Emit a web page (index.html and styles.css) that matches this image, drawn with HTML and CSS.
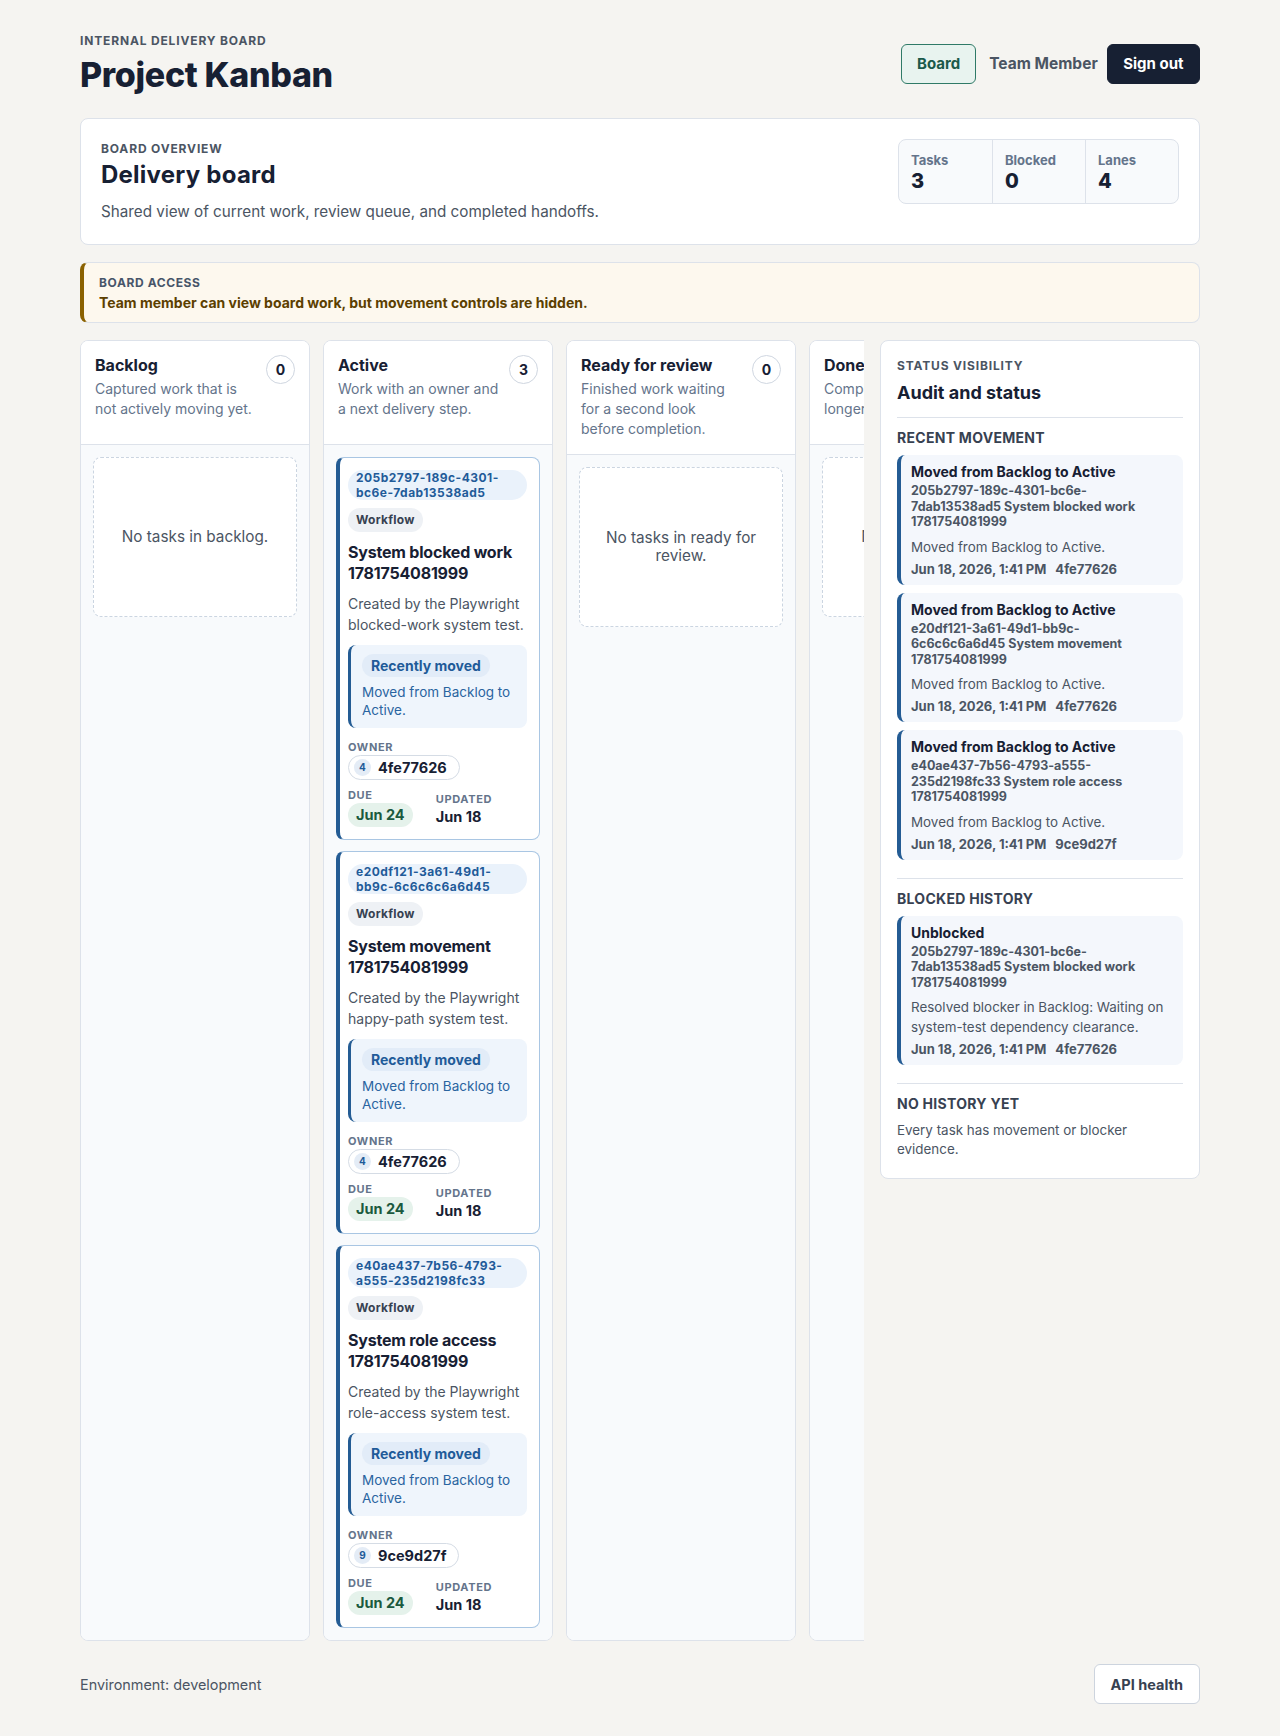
FILE: index.html
```html
<!DOCTYPE html>
<html lang="en">
<head>
<meta charset="utf-8">
<title>Project Kanban</title>
<link rel="stylesheet" href="styles.css">
</head>
<body>
<div class="page">
  <header class="topbar">
    <div class="brand">
      <p class="eyebrow">Internal delivery board</p>
      <h1>Project Kanban</h1>
    </div>
    <nav class="nav">
      <a class="btn btn-board" href="#">Board</a>
      <span class="role">Team Member</span>
      <button class="btn btn-dark" type="button">Sign out</button>
    </nav>
  </header>

  <section class="overview">
    <div class="overview-text">
      <p class="eyebrow">Board overview</p>
      <h2>Delivery board</h2>
      <p class="overview-desc">Shared view of current work, review queue, and completed handoffs.</p>
    </div>
    <dl class="stats">
      <div class="stat"><dt>Tasks</dt><dd>3</dd></div>
      <div class="stat"><dt>Blocked</dt><dd>0</dd></div>
      <div class="stat"><dt>Lanes</dt><dd>4</dd></div>
    </dl>
  </section>

  <section class="access">
    <p class="eyebrow">Board access</p>
    <p class="access-text">Team member can view board work, but movement controls are hidden.</p>
  </section>

  <div class="workspace">
    <div class="board">
      <div class="lanes">
        <section class="lane">
          <header class="lane-head">
            <div>
              <h3>Backlog</h3>
              <p>Captured work that is not actively moving yet.</p>
            </div>
            <span class="count">0</span>
          </header>
          <div class="lane-body">
            <div class="empty">No tasks in backlog.</div>
          </div>
        </section>

        <section class="lane">
          <header class="lane-head">
            <div>
              <h3>Active</h3>
              <p>Work with an owner and a next delivery step.</p>
            </div>
            <span class="count">3</span>
          </header>
          <div class="lane-body">
            <article class="task">
              <span class="task-id">205b2797-189c-4301-bc6e-7dab13538ad5</span>
              <span class="tag">Workflow</span>
              <h4>System blocked work 1781754081999</h4>
              <p class="task-desc">Created by the Playwright blocked-work system test.</p>
              <div class="moved">
                <span class="moved-pill">Recently moved</span>
                <p>Moved from Backlog to Active.</p>
              </div>
              <p class="label">Owner</p>
              <span class="owner"><span class="avatar">4</span>4fe77626</span>
              <div class="meta">
                <div><p class="label">Due</p><span class="due">Jun 24</span></div>
                <div><p class="label">Updated</p><span class="updated">Jun 18</span></div>
              </div>
            </article>

            <article class="task">
              <span class="task-id">e20df121-3a61-49d1-bb9c-6c6c6c6a6d45</span>
              <span class="tag">Workflow</span>
              <h4>System movement 1781754081999</h4>
              <p class="task-desc">Created by the Playwright happy-path system test.</p>
              <div class="moved">
                <span class="moved-pill">Recently moved</span>
                <p>Moved from Backlog to Active.</p>
              </div>
              <p class="label">Owner</p>
              <span class="owner"><span class="avatar">4</span>4fe77626</span>
              <div class="meta">
                <div><p class="label">Due</p><span class="due">Jun 24</span></div>
                <div><p class="label">Updated</p><span class="updated">Jun 18</span></div>
              </div>
            </article>

            <article class="task">
              <span class="task-id">e40ae437-7b56-4793-a555-235d2198fc33</span>
              <span class="tag">Workflow</span>
              <h4>System role access 1781754081999</h4>
              <p class="task-desc">Created by the Playwright role-access system test.</p>
              <div class="moved">
                <span class="moved-pill">Recently moved</span>
                <p>Moved from Backlog to Active.</p>
              </div>
              <p class="label">Owner</p>
              <span class="owner"><span class="avatar">9</span>9ce9d27f</span>
              <div class="meta">
                <div><p class="label">Due</p><span class="due">Jun 24</span></div>
                <div><p class="label">Updated</p><span class="updated">Jun 18</span></div>
              </div>
            </article>
          </div>
        </section>

        <section class="lane">
          <header class="lane-head">
            <div>
              <h3>Ready for review</h3>
              <p>Finished work waiting for a second look before completion.</p>
            </div>
            <span class="count">0</span>
          </header>
          <div class="lane-body">
            <div class="empty">No tasks in ready for review.</div>
          </div>
        </section>

        <section class="lane">
          <header class="lane-head">
            <div>
              <h3>Done</h3>
              <p>Completed work that no longer needs attention.</p>
            </div>
            <span class="count">0</span>
          </header>
          <div class="lane-body">
            <div class="empty">No tasks in done.</div>
          </div>
        </section>
      </div>
    </div>

    <aside class="status">
      <div class="status-head">
        <p class="eyebrow">Status visibility</p>
        <h2>Audit and status</h2>
      </div>

      <section class="status-section">
        <h3>Recent movement</h3>
        <div class="events">
          <div class="event">
            <p class="event-title">Moved from Backlog to Active</p>
            <p class="event-task">205b2797-189c-4301-bc6e-7dab13538ad5 System blocked work 1781754081999</p>
            <p class="event-desc">Moved from Backlog to Active.</p>
            <p class="event-meta"><span>Jun 18, 2026, 1:41 PM</span><span>4fe77626</span></p>
          </div>
          <div class="event">
            <p class="event-title">Moved from Backlog to Active</p>
            <p class="event-task">e20df121-3a61-49d1-bb9c-6c6c6c6a6d45 System movement 1781754081999</p>
            <p class="event-desc">Moved from Backlog to Active.</p>
            <p class="event-meta"><span>Jun 18, 2026, 1:41 PM</span><span>4fe77626</span></p>
          </div>
          <div class="event">
            <p class="event-title">Moved from Backlog to Active</p>
            <p class="event-task">e40ae437-7b56-4793-a555-235d2198fc33 System role access 1781754081999</p>
            <p class="event-desc">Moved from Backlog to Active.</p>
            <p class="event-meta"><span>Jun 18, 2026, 1:41 PM</span><span>9ce9d27f</span></p>
          </div>
        </div>
      </section>

      <section class="status-section">
        <h3>Blocked history</h3>
        <div class="events">
          <div class="event">
            <p class="event-title">Unblocked</p>
            <p class="event-task">205b2797-189c-4301-bc6e-7dab13538ad5 System blocked work 1781754081999</p>
            <p class="event-desc">Resolved blocker in Backlog: Waiting on system-test dependency clearance.</p>
            <p class="event-meta"><span>Jun 18, 2026, 1:41 PM</span><span>4fe77626</span></p>
          </div>
        </div>
      </section>

      <section class="status-section">
        <h3>No history yet</h3>
        <p class="status-note">Every task has movement or blocker evidence.</p>
      </section>
    </aside>
  </div>

  <footer class="footer">
    <span>Environment: development</span>
    <a class="btn btn-light" href="#">API health</a>
  </footer>
</div>
</body>
</html>
```

FILE: styles.css
```css
* { box-sizing: border-box; }

html, body {
  margin: 0;
  padding: 0;
  background: #f5f4f1;
  color: #172033;
  font-family: Inter, "Noto Sans", "Liberation Sans", sans-serif;
}

p, h1, h2, h3, h4, dl, dd { margin: 0; }

.page {
  max-width: 1120px;
  margin: 0 auto;
  padding: 33px 0 33px;
  display: flex;
  flex-direction: column;
  gap: 17px;
}

.eyebrow {
  font-size: 12px;
  line-height: 16px;
  font-weight: 700;
  letter-spacing: 0.07em;
  text-transform: uppercase;
  color: #4b5563;
}

/* Top bar */
.topbar {
  display: flex;
  justify-content: space-between;
  align-items: center;
  margin-bottom: 7px;
}
.brand h1 {
  margin-top: 6px;
  font-size: 34px;
  line-height: 39px;
  font-weight: 800;
  letter-spacing: -0.01em;
  color: #172033;
}
.nav {
  display: flex;
  align-items: center;
  gap: 8px;
}
.btn {
  display: inline-flex;
  align-items: center;
  height: 40px;
  padding: 0 15px;
  border-radius: 6px;
  font-family: inherit;
  font-size: 15px;
  font-weight: 700;
  text-decoration: none;
  border: 1px solid transparent;
  cursor: pointer;
}
.btn-board {
  background: #e8f3ef;
  border-color: #2f7a67;
  color: #1b5a4a;
}
.role {
  padding: 0 1px 0 5px;
  font-size: 15.5px;
  font-weight: 700;
  color: #4b5563;
}
.btn-dark {
  background: #172033;
  border-color: #172033;
  color: #ffffff;
  padding: 0 15.5px;
}
.btn-light {
  background: #ffffff;
  border-color: #cdd4de;
  color: #374151;
  font-size: 14.5px;
  padding: 0 16px;
}

/* Overview */
.overview {
  display: flex;
  justify-content: space-between;
  align-items: flex-start;
  background: #ffffff;
  border: 1px solid #dde2ea;
  border-radius: 8px;
  padding: 22px 20px 20px 20px;
}
.overview h2 {
  margin-top: 3px;
  font-size: 24px;
  line-height: 30px;
  font-weight: 700;
  letter-spacing: 0.01em;
}
.overview-desc {
  margin-top: 10px;
  font-size: 15.25px;
  line-height: 24px;
  color: #4b5563;
}
.overview .stats { margin-top: -2px; }
.stats {
  display: flex;
  background: #f8fafc;
  border: 1px solid #dde2ea;
  border-radius: 8px;
}
.stat {
  width: 93px;
  padding: 11px 12px 10px;
}
.stat + .stat { border-left: 1px solid #dde2ea; }
.stat dt {
  font-size: 13px;
  line-height: 18px;
  font-weight: 700;
  color: #64748b;
}
.stat dd {
  font-size: 20px;
  line-height: 24px;
  font-weight: 800;
  color: #172033;
}

/* Access banner */
.access {
  background: #fdf8ee;
  border: 1px solid #dde2ea;
  border-left: 4px solid #8a6100;
  border-radius: 8px;
  padding: 12px 16px 10px 15px;
}
.access .eyebrow { color: #475569; letter-spacing: 0.05em; }
.access-text {
  margin-top: 3px;
  font-size: 14px;
  line-height: 18px;
  font-weight: 700;
  color: #5c3f00;
}

/* Workspace */
.workspace {
  display: grid;
  grid-template-columns: minmax(0, 1fr) 320px;
  gap: 16px;
  align-items: start;
}
.board { overflow: hidden; }
.lanes {
  display: flex;
  gap: 13px;
  align-items: stretch;
}
.lane {
  flex: 0 0 230px;
  display: flex;
  flex-direction: column;
  background: #ffffff;
  border: 1px solid #dde2ea;
  border-radius: 8px;
  overflow: hidden;
}
.lane-head {
  display: flex;
  justify-content: space-between;
  align-items: flex-start;
  gap: 8px;
  min-height: 104px;
  padding: 14px 14px 15px;
  background: #ffffff;
  border-bottom: 1px solid #dde2ea;
}
.lane-head h3 {
  font-size: 16px;
  line-height: 20px;
  font-weight: 700;
  white-space: nowrap;
}
.lane-head p {
  margin-top: 4px;
  font-size: 14px;
  line-height: 20px;
  color: #64748b;
  text-wrap: balance;
}
.count {
  flex: 0 0 29px;
  width: 29px;
  height: 29px;
  border: 1px solid #cfd6e0;
  border-radius: 50%;
  display: flex;
  align-items: center;
  justify-content: center;
  font-size: 14px;
  font-weight: 700;
  color: #172033;
  background: #ffffff;
}
.lane-body {
  flex: 1;
  display: flex;
  flex-direction: column;
  gap: 11px;
  padding: 12px;
  background: #f8fafc;
}
.empty {
  height: 160px;
  display: flex;
  align-items: center;
  justify-content: center;
  text-align: center;
  padding: 16px;
  background: #ffffff;
  border: 1px dashed #cbd5e1;
  border-radius: 8px;
  font-size: 15.3px;
  line-height: 18px;
  color: #4b5563;
}

/* Task card */
.task {
  display: flex;
  flex-direction: column;
  align-items: flex-start;
  background: #ffffff;
  border: 1px solid #a9c6e3;
  border-left: 4px solid #245c94;
  border-radius: 8px;
  padding: 12px 12px 12px 8px;
}
.task-id {
  display: block;
  align-self: stretch;
  padding: 0 8px;
  border-radius: 15px;
  background: #eaf2fb;
  color: #1f5b99;
  font-size: 12px;
  line-height: 15px;
  font-weight: 700;
  letter-spacing: 0.04em;
}
.tag {
  margin-top: 8px;
  display: inline-block;
  padding: 4px 8px;
  border-radius: 999px;
  background: #eef1f5;
  color: #374151;
  font-size: 12px;
  line-height: 16px;
  font-weight: 700;
  letter-spacing: 0.02em;
}
.task h4 {
  margin-top: 10px;
  font-size: 16px;
  line-height: 21px;
  font-weight: 700;
  letter-spacing: -0.2px;
  color: #172033;
}
.task-desc {
  margin-top: 9px;
  font-size: 14px;
  line-height: 21px;
  color: #4b5563;
}
.moved {
  margin-top: 10px;
  align-self: stretch;
  background: #eff5fc;
  border-left: 3px solid #245c94;
  border-radius: 8px;
  padding: 9px 10px 9px 11px;
}
.moved-pill {
  display: inline-block;
  padding: 2px 9px;
  border-radius: 999px;
  background: #e2ecf8;
  color: #1f5b99;
  font-size: 14px;
  line-height: 19px;
  font-weight: 700;
}
.moved p {
  margin-top: 6px;
  font-size: 13.5px;
  line-height: 18px;
  color: #2a64a0;
}
.label {
  font-size: 11px;
  line-height: 15px;
  font-weight: 700;
  letter-spacing: 0.06em;
  text-transform: uppercase;
  color: #64748b;
}
.task > .label { margin-top: 12px; }
.owner {
  display: inline-flex;
  align-items: center;
  gap: 7px;
  padding: 2px 12px 2px 5px;
  border: 1px solid #d5dce5;
  border-radius: 999px;
  font-size: 14.5px;
  line-height: 19px;
  font-weight: 700;
  color: #172033;
}
.avatar {
  width: 17px;
  height: 17px;
  border-radius: 50%;
  background: #e4ecf6;
  color: #1f5b99;
  font-size: 10px;
  line-height: 17px;
  text-align: center;
  font-weight: 700;
}
.meta {
  margin-top: 8px;
  display: flex;
  align-items: flex-end;
  gap: 23px;
}
.due {
  display: inline-block;
  padding: 2px 8px;
  border-radius: 999px;
  background: #e5f2eb;
  color: #1b5a3e;
  font-size: 14.5px;
  line-height: 20px;
  font-weight: 700;
}
.updated {
  display: block;
  font-size: 14.5px;
  line-height: 20px;
  font-weight: 700;
  color: #172033;
}

/* Status panel */
.status {
  background: #ffffff;
  border: 1px solid #dde2ea;
  border-radius: 8px;
  padding: 17px 16px 19px;
}
.status-head h2 {
  margin-top: 7px;
  font-size: 18px;
  line-height: 24px;
  font-weight: 700;
}
.status-section {
  margin-top: 18px;
  border-top: 1px solid #dde2ea;
  padding-top: 11px;
}
.status-head + .status-section { margin-top: 12px; }
.status-section h3 {
  font-size: 14px;
  line-height: 18px;
  font-weight: 700;
  letter-spacing: 0.02em;
  text-transform: uppercase;
  color: #374151;
}
.events {
  margin-top: 8px;
  display: flex;
  flex-direction: column;
  gap: 8px;
}
.event {
  background: #f4f7fc;
  border-left: 4px solid #245c94;
  border-radius: 8px;
  padding: 8px 12px 8px 10px;
}
.event-title {
  font-size: 14px;
  line-height: 18px;
  font-weight: 700;
  color: #172033;
}
.event-task {
  margin-top: 2px;
  padding-right: 6px;
  font-size: 12.5px;
  line-height: 15.5px;
  font-weight: 700;
  color: #4b5563;
}
.event-desc {
  margin-top: 7px;
  font-size: 13.4px;
  line-height: 20px;
  color: #4b5563;
}
.event-meta {
  margin-top: 4px;
  display: flex;
  gap: 9px;
  font-size: 13px;
  line-height: 16px;
  font-weight: 700;
  color: #4b5563;
}
.status-note {
  margin-top: 8px;
  font-size: 13.4px;
  line-height: 19px;
  color: #4b5563;
}

/* Footer */
.footer {
  margin-top: 6px;
  display: flex;
  justify-content: space-between;
  align-items: center;
  font-size: 14.4px;
  color: #4b5563;
}
```
